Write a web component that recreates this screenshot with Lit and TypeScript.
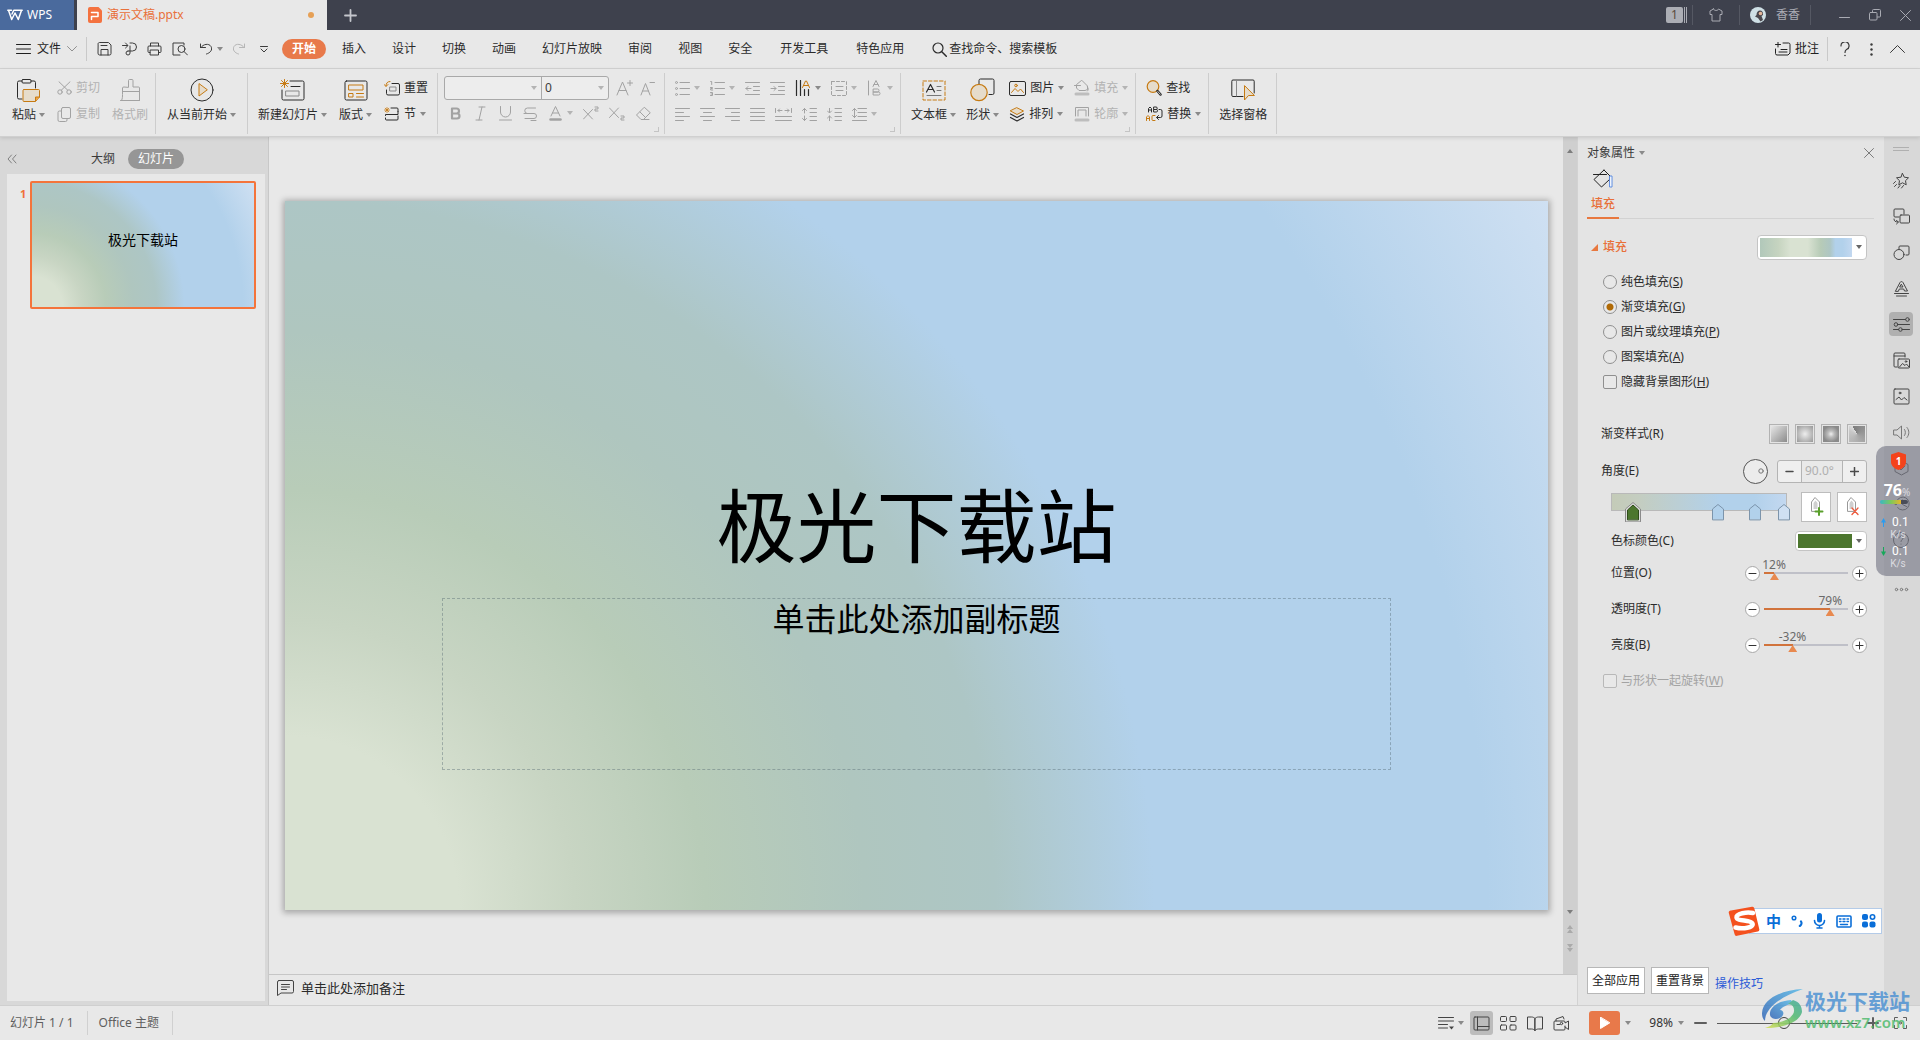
import { LitElement, html, css, svg, TemplateResult, SVGTemplateResult } from "lit";
import { customElement, property } from "lit/decorators.js";
import { classMap } from "lit/directives/class-map.js";

/* ---------- icon drawing helpers ---------- */

const pic = (w: number, h: number, body: SVGTemplateResult, cls = "ic") => html`
  <svg class=${cls} width=${w} height=${h} viewBox="0 0 ${w} ${h}" fill="none" stroke="currentColor"
    stroke-width="1" stroke-linecap="round" stroke-linejoin="round" aria-hidden="true">${body}</svg>`;

const caret = (cls = "caret") => html`
  <svg class=${cls} width="6" height="4" viewBox="0 0 6 4" fill="currentColor" aria-hidden="true"><path d="M0 0h6L3 4z"/></svg>`;

const O = "#c67a12";
const SAND = "#e6dccb";

const I = {
  wpsMark: pic(16, 12, svg`<path d="M0.800 1.200h3.700M11.500 1.200h3.700M1.500 1.200l3.200 9.300L8 4l3.300 6.500 3.200-9.300M5 5l1.800-3.800h4.700" stroke-width="1.500"/>`),
  docP: pic(14, 16, svg`<path d="M2 0h8.500L14 3.500V14a2 2 0 0 1-2 2H2a2 2 0 0 1-2-2V2a2 2 0 0 1 2-2z" fill="#f4723f" stroke="none"/><path d="M3.500 5.500h6.500v4H3.500v3" stroke="#fff" stroke-width="1.500"/>`),
  plus: pic(13, 13, svg`<path d="M6.500 1v11M1 6.500h11" stroke-width="1.800"/>`),
  shirt: pic(14, 14, svg`<path d="M4.500 1 1 3v3.500h2V13h8V6.500h2V3L9.500 1C9 3 5 3 4.500 1z"/>`),
  avatar: pic(16, 16, svg`<circle cx="8" cy="8" r="8" fill="#cfe0e6" stroke="none"/><path d="M6.500 8c0-3 1.500-4.500 3.500-4.500s3.500 1.500 3 4.500l-1.500 1 1.500 4-2.500 1.500L8 11 5 9.500z" fill="#4a484e" stroke="none"/><circle cx="10.500" cy="6.500" r="1.800" fill="#e5b79b" stroke="none"/>`),
  min: pic(11, 11, svg`<path d="M.5 7.500h10"/>`),
  restore: pic(12, 12, svg`<rect x="0.500" y="3.500" width="7.500" height="7.500" rx="1"/><path d="M3.500 3V1.500a1 1 0 0 1 1-1H10.500a1 1 0 0 1 1 1V7a1 1 0 0 1-1 1H8.500"/>`),
  close: pic(11, 11, svg`<path d="M.5.5l10 10M10.500.5l-10 10"/>`),
  burger: pic(15, 12, svg`<path d="M.5 1.500h14M.5 6h14M.5 10.500h14"/>`),
  chevDown: pic(10, 6, svg`<path d="M.5.5 5 5 9.500.5" stroke="#909090"/>`),
  save: pic(15, 14, svg`<path d="M1 2.500A1.500 1.500 0 0 1 2.500.5h9L14 3v8.500a1.500 1.500 0 0 1-1.500 1.500h-10A1.500 1.500 0 0 1 1 11.500zM4 13V7.500h7V13M4 3.500h6"/>`),
  exportP: pic(15, 14, svg`<path d="M.5 3.500h5M3.500 1l2.500 2.500L3.500 6M8 1h2.500a3.500 3.500 0 1 1 0 8H6M6 9a2 2 0 1 0 2 2V4"/>`),
  print: pic(15, 14, svg`<path d="M3.500 4V1h8v3M3 10.500H2a1 1 0 0 1-1-1V5a1 1 0 0 1 1-1h11a1 1 0 0 1 1 1v4.500a1 1 0 0 1-1 1h-1M3.500 8h8v5h-8z"/>`),
  preview: pic(16, 14, svg`<path d="M12 3V1H1v12h7"/><circle cx="9.500" cy="7" r="3.500"/><path d="M12 9.500l3.500 3.500"/>`),
  undo: pic(12, 12, svg`<path d="M.5 4.500h5M.5 4.500V1M1 4.500C3 1 9 0 11 3.500s-1 6.500-4.500 7.500"/>`),
  redo: pic(12, 12, svg`<path d="M11.500 4.500h-5M11.500 4.500V1M11 4.500C9 1 3 0 1 3.500S2 10 5.500 11"/>`),
  customize: pic(8, 7, svg`<path d="M.5.5h7M1 3l3 3 3-3"/>`),
  search: pic(15, 15, svg`<circle cx="6" cy="6" r="5" stroke-width="1.200"/><path d="M9.800 9.800l4.500 4.500" stroke-width="1.500"/>`),
  comment: pic(16, 14, svg`<path d="M3 0v5M.5 2.500h5M8 1h5.500A1.500 1.500 0 0 1 15 2.500V11l-2 2H2A1.500 1.500 0 0 1 .5 11.500V7M6 7.500h6M4 10h8"/>`),
  help: pic(10, 15, svg`<path d="M1 4a4 4 0 1 1 5.500 3.500C5.300 8.200 5 9 5 10.500" stroke-width="1.200"/><circle cx="5" cy="13.500" r=".8" fill="currentColor" stroke="none"/>`),
  dotsV: pic(3, 13, svg`<g fill="currentColor" stroke="none"><circle cx="1.500" cy="1.500" r="1.200"/><circle cx="1.500" cy="6.500" r="1.200"/><circle cx="1.500" cy="11.500" r="1.200"/></g>`),
  chevUp: pic(15, 8, svg`<path d="M.5 7.500l7-7 7 7"/>`),

  paste: pic(23, 23, svg`<path d="M5 2H2a1.500 1.500 0 0 0-1.500 1.500v15A1.500 1.500 0 0 0 2 20h3M14 2h3a1.500 1.500 0 0 1 1.500 1.500V9"/><rect x="5" y=".5" width="9" height="3.500" rx="1"/><path d="M7 10.500h14.500a1 1 0 0 1 1 1V18l-4 4.500H7a1 1 0 0 1-1-1v-10a1 1 0 0 1 1-1z" fill=${SAND} stroke=${O}/><path d="M18.500 22v-4h4" fill="#f2a33c" stroke=${O}/>`),
  cut: pic(15, 14, svg`<circle cx="3" cy="11" r="2.200"/><circle cx="12" cy="11" r="2.200"/><path d="M4.300 9.200 13 .8M10.700 9.200 2 .8"/>`),
  copy: pic(15, 15, svg`<path d="M10 12v1a1.500 1.500 0 0 1-1.500 1.500h-6A1.500 1.500 0 0 1 1 13V5.500A1.500 1.500 0 0 1 2.500 4H4"/><rect x="4.500" y=".5" width="9" height="11" rx="1.500"/>`),
  brush: pic(21, 22, svg`<path d="M8.500 8V1.500a1 1 0 0 1 1-1H12a1 1 0 0 1 1 1V8h5.500a1 1 0 0 1 1 1v12.500H1.500c1-2 1-4 1-6V9a1 1 0 0 1 1-1zM2.500 12.500h17M.5 21.500h19"/>`),
  playRound: pic(24, 24, svg`<circle cx="12" cy="12" r="11"/><path d="M9 6v12l8-6z" fill=${SAND} stroke=${O}/>`),
  newSlide: pic(25, 22, svg`<path d="M10 2h12.500A1.500 1.500 0 0 1 24 3.500v16a1.500 1.500 0 0 1-1.500 1.500h-19A1.500 1.500 0 0 1 2 19.500V11M11 7.500h9"/><rect x="6" y="12" width="13" height="5" stroke="#8a8a8a"/><path d="M4.500.5v8M.5 4.500h8M1.500 1.500l6 6M7.500 1.500l-6 6" stroke=${O}/>`),
  layout: pic(24, 21, svg`<rect x="1" y="1" width="22" height="19" rx="1.500"/><path d="M5 5h14v5H5zM5 13.500h4V17H5zM12.500 13.500h7M12.500 17h7" stroke=${O}/>`),
  reset: pic(16, 15, svg`<path d="M8 2.500h6A1.500 1.500 0 0 1 15.500 4v8.500a1.500 1.500 0 0 1-1.500 1.500H4a1.500 1.500 0 0 1-1.500-1.500V9"/><rect x="6" y="6" width="6" height="4" stroke="#8a8a8a"/><path d="M6 .5C3.500.5 2 2 2 5M.2 3.500 2 5.500 4 3.500" stroke=${O}/>`),
  section: pic(16, 14, svg`<path d="M7 1h6a1 1 0 0 1 1 1v2.500M1.500 8.500v-1h12.500v-3M1.500 11v1a1 1 0 0 0 1 1H13a1 1 0 0 0 1-1V9"/><path d="M3 .5v5M.5 3h5M1.200 1.200l3.600 3.600M4.800 1.200 1.200 4.800" stroke=${O} stroke-width=".8"/>`),

  fontUp: pic(17, 16, svg`<path d="M1 15 6.500 2 12 15M3 10.500h7M14 .5v5M11.500 3h5"/>`),
  fontDown: pic(15, 16, svg`<path d="M1 15 5.500 3.500 10 15M2.700 11h5.800M10 2.500h4.500"/>`),
  bold: pic(15, 15, svg`<path d="M4 2.500h4.500a2.400 2.400 0 0 1 0 5H4zM4 7.500h5a2.500 2.500 0 0 1 0 5H4z" stroke-width="2.200"/>`),
  italic: pic(15, 15, svg`<path d="M6 1h6M3 14h6M9 1 6 14"/>`),
  under: pic(15, 15, svg`<path d="M2.500.5V6a5 5 0 0 0 10 0V.5M1.500 14h12"/>`),
  strike: pic(15, 15, svg`<path d="M12.500 2H4.500a2.700 2.700 0 0 0 0 5.500h6.500a2.500 2.500 0 0 1 0 5H2M1 7.500h4M8 14.500h5"/>`),
  fontColor: pic(15, 15, svg`<path d="M3 10 7.500.5 12 10M4.500 7h6"/><path d="M2.500 13.500h10" stroke-width="2.500"/>`),
  sup: pic(16, 15, svg`<path d="M.5 3.500l9 9.500M9.500 3.500.5 13M12 1h3v2h-3v2h3"/>`),
  sub: pic(16, 15, svg`<path d="M.5 2l9 9.500M9.500 2l-9 9.500M12 10h3v2h-3v2h3"/>`),
  eraser: pic(16, 15, svg`<path d="M9 1.500 1.500 9 6 13.500h2.500L15 7zM5 6l5.500 5.500M8 13.500h6"/>`),

  bullets: pic(15, 15, svg`<path d="M5 1.500h9.500M5 7.500h9.500M5 13.500h9.500"/><circle cx="1.500" cy="1.500" r="1"/><circle cx="1.500" cy="7.500" r="1"/><circle cx="1.500" cy="13.500" r="1"/>`),
  numbers: pic(15, 15, svg`<path d="M5 1.500h9.500M5 7.500h9.500M5 13.500h9.500M.7.5h1v3M.5 6.500h2v1h-1.800v1.500h2M.5 11.500h2v3h-2M1 13h1"/>`),
  outdent: pic(15, 15, svg`<path d="M.5 1.500h14M8.500 5.500h6M8.500 9.500h6M.5 13.500h14M1 7.500h5M3 5.500l-2 2 2 2"/>`),
  indent: pic(15, 15, svg`<path d="M.5 1.500h14M8.500 5.500h6M8.500 9.500h6M.5 13.500h14M1 7.500h5M4 5.500l2 2-2 2"/>`),
  textDir: pic(16, 16, svg`<path d="M1.500.5v15M5.500.5v15M9.500 9.500v6M13.500 9.500v6" stroke-width="1.200"/><path d="M7.500 7.500l3-6.500h1l3 6.500M8.500 5.500h5" stroke=${O}/>`),
  alignBox: pic(16, 15, svg`<rect x=".5" y=".5" width="15" height="14" stroke-dasharray="3 2"/><path d="M5 5.500h7M5 9.500h7"/>`),
  abText: pic(16, 16, svg`<path d="M1.500 1v14M6 6.500 9 .5l3 6M7 4.500h4M6.500 9h4a1.500 1.500 0 0 1 0 3h-4zM6.500 12h5a1.500 1.500 0 0 1 0 3h-5z"/>`),
  alL: pic(15, 13, svg`<path d="M.5.5h14M.5 4.500h8M.5 8.500h14M.5 12.500h8"/>`),
  alC: pic(15, 13, svg`<path d="M.5.5h14M3.500 4.500h8M.5 8.500h14M3.500 12.500h8"/>`),
  alR: pic(15, 13, svg`<path d="M.5.5h14M6.500 4.500h8M.5 8.500h14M6.500 12.500h8"/>`),
  alJ: pic(15, 13, svg`<path d="M.5.5h14M.5 4.500h14M.5 8.500h14M.5 12.500h14"/>`),
  alD: pic(17, 13, svg`<path d="M.5.5v4M16.500.5v4M3 2.500h4M10 2.500h4M4.500 1 3 2.500 4.500 4M12.500 1 14 2.500 12.500 4M.5 8.500h16M.5 12.500h16"/>`),
  spUp: pic(15, 13, svg`<path d="M8 .5h6.500M8 4.500h6.500M8 8.500h6.500M8 12.500h6.500M2.500.5V5M.5 2.500l2-2 2 2M2.500 8v4.500M.5 10.500l2 2 2-2"/>`),
  spDown: pic(15, 13, svg`<path d="M8 .5h6.500M8 4.500h6.500M8 8.500h6.500M8 12.500h6.500M2.500 0v4.500M.5 3l2 2 2-2M2.500 8v5M.5 10l2-2 2 2"/>`),
  lineSp: pic(15, 13, svg`<path d="M6 .5h8.500M6 4.500h8.500M6 8.500h8.500M.5 12.500h14M2.500.5v9M.5 2.500l2-2 2 2M.5 7.500l2 2 2-2"/>`),

  textBox: pic(24, 21, svg`<rect x="1" y="1" width="22" height="19" stroke=${O} stroke-dasharray="3.500 2"/><path d="M4.500 12 8.500 4.500 12.500 12M6 9.500h5" stroke-width="1.200"/><path d="M5 15.500h14M15 6.500h4M15 10.500h4" stroke="#777"/>`),
  shapes: pic(25, 24, svg`<path d="M9 6V2.500A1.500 1.500 0 0 1 10.500 1h12A1.500 1.500 0 0 1 24 2.500V15a1.500 1.500 0 0 1-1.500 1.500H19"/><circle cx="9" cy="14.500" r="8.200" fill=${SAND} stroke=${O} stroke-width="1.200"/>`),
  image: pic(17, 15, svg`<rect x=".5" y=".5" width="16" height="14" rx="1.500"/><path d="M2.500 11.500l3.500-4 3 3 2.500-2.500 3 3.500" stroke=${O}/><circle cx="7" cy="4.500" r="1.300" stroke=${O}/>`),
  arrange: pic(16, 15, svg`<path d="M1.500 7 8 10.500 14.500 7M1.500 10.500 8 14l6.500-3.500" stroke-width="1.200"/><path d="M8 .8 14.500 4 8 7.500 1.500 4z" fill=${SAND} stroke=${O}/>`),
  fillTool: pic(16, 16, svg`<path d="M8 .5 13.500 6v3.500L11 10.500H5L2.500 8V5zM.5 5.500h6M13.500 7c1 1.500 1 3 0 4"/><path d="M2 14h12" stroke-width="3" stroke="#bdbdbd"/>`),
  outline: pic(16, 16, svg`<path d="M1.500 10V1.500h13V10M4 10V4h8v6"/><path d="M2 14h12" stroke-width="3" stroke="#bdbdbd"/>`),
  find: pic(16, 16, svg`<circle cx="7" cy="6.500" r="5.800" fill=${SAND} stroke=${O} stroke-width="1.200"/><path d="M11.500 11l3 3.500" stroke-width="2.500"/><path d="M11.800 11.500l2.400 2.700" stroke="#e8e8e8" stroke-width=".8"/>`),
  replace: pic(17, 16, svg`<path d="M2.500 6V2.500L4 1l1.500 1.500V6M2.500 4h3M8 1h2a1.200 1.200 0 0 1 0 2.500H8zM8 3.500h2.300a1.200 1.200 0 0 1 0 2.500H8zM13 3.500h1.500a1.500 1.500 0 0 1 1.500 1.500v5a1.500 1.500 0 0 1-1.500 1.500H11M12.500 9.500l-2 2 2 2"/><path d="M.5 14.500V11L2 9.500 3.500 11v3.500M.5 12.500h3M9 9.500H7a1 1 0 0 0-1 1v3a1 1 0 0 0 1 1h2" stroke=${O}/>`),
  selPane: pic(24, 22, svg`<path d="M12 17.500H2a1.200 1.200 0 0 1-1.200-1.200v-14A1.200 1.200 0 0 1 2 1h20a1.200 1.200 0 0 1 1.200 1.200V14"/><path d="M5.500 1v16" stroke="#888"/><path d="M13.500 7v14l4-4.500h5.500z" fill=${SAND} stroke=${O}/>`),

  collapse: pic(10, 10, svg`<path d="M4.500 1 1 5l3.500 4M9 1 5.500 5 9 9" stroke="#808080"/>`),
  noteBubble: pic(17, 16, svg`<path d="M2 .5h13A1.500 1.500 0 0 1 16.500 2v9.500A1.500 1.500 0 0 1 15 13H4L.5 15.500V2A1.500 1.500 0 0 1 2 .5zM4.500 4.500h8M4.500 7h8M4.500 9.500h5"/>`),
  bucket: pic(20, 20, svg`<path d="M11 1 1 10.500 8.500 18 17 10V7L11 1M.5 5.500h13" stroke="#222"/><rect x="17" y="7" width="2" height="11" stroke="#5b8be0" fill="#fff"/>`),

  sStar: pic(17, 17, svg`<path d="M9.500 1.500l1.800 3.700 4.200.6-3 2.900.7 4.100-3.700-2-3.700 2 .7-4.100-3-2.900 4.200-.6zM2.500 9.500l-2 2M3.500 12.500l-2 2M7 13.500l-2 2.500M10.500 13.500l-2 2.500"/>`),
  sSwap: pic(17, 17, svg`<path d="M6 9H2a1 1 0 0 1-1-1V2a1 1 0 0 1 1-1h8a1 1 0 0 1 1 1v4"/><rect x="7" y="7" width="9.500" height="8" rx="1"/><path d="M1 11c0 2 1 3 4 3M3.500 12.500l2 1.500-2 2"/>`),
  sShapes: pic(17, 17, svg`<path d="M6 5V3a1 1 0 0 1 1-1h8a1 1 0 0 1 1 1v7a1 1 0 0 1-1 1h-2"/><circle cx="6" cy="10.500" r="5"/>`),
  sText: pic(17, 17, svg`<path d="M2.500 11 7 2.500a1.700 1.700 0 0 1 3 0L14.500 11h-3l-.8-2H6.300l-.8 2zM7 7h3L8.500 4.500zM1.500 13.500h14M3.500 16h10"/>`),
  sProps: pic(17, 15, svg`<path d="M.5 2.500h12M5 7.500h11.500M.5 12.500h5M9.500 12.500h7"/><circle cx="14.500" cy="2.500" r="1.800"/><circle cx="3" cy="7.500" r="1.800"/><circle cx="7.500" cy="12.500" r="1.800"/>`),
  sLibrary: pic(17, 17, svg`<path d="M4 15H2a1 1 0 0 1-1-1V2a1 1 0 0 1 1-1h9a1 1 0 0 1 1 1v3M1 4h11"/><rect x="5" y="7" width="11.500" height="9" rx="1"/><path d="M6.500 15l3-3.500 2.500 2 1.500-1.500 2.500 3"/><circle cx="13" cy="9.500" r=".8"/>`),
  sImage: pic(17, 17, svg`<rect x="1" y="1" width="15" height="15" rx="1"/><path d="M3 11.500 6 9l2.500 3L11 9.500l3 2.500"/><circle cx="7" cy="5" r=".9"/>`),
  sSound: pic(17, 15, svg`<path d="M1 5h3l4.500-4v13L4 10H1zM11.500 4.500c1.200 1.800 1.200 4.200 0 6M14 2.500c2.500 3 2.500 7 0 10" stroke="#777"/>`),
  sHex: pic(15, 16, svg`<path d="M7.500 1 14 4.500v7L7.500 15 1 11.500v-7zM4.500 7.500l2.500 2.500 4-4"/>`),
  sClock: pic(17, 16, svg`<path d="M3.500 5.500a6.500 6.500 0 1 1 1 6M9.500 4v4.500l4 2M.5 7l2.500 2 2-2.500"/>`),
  sHelp: pic(16, 16, svg`<circle cx="8" cy="8" r="7.500"/><path d="M6 6a2 2 0 1 1 3 1.800c-.8.5-1 .9-1 1.700M8 12v.2"/>`),
  sMore: pic(15, 5, svg`<circle cx="2.500" cy="2.500" r="1.200" stroke="#777"/><circle cx="7.500" cy="2.500" r="1.200" stroke="#777"/><circle cx="12.500" cy="2.500" r="1.200" stroke="#777"/>`),

  stNotes: pic(16, 14, svg`<path d="M.5 1.500h15M.5 5h15M.5 8.500h9M.5 12h9"/><path d="M11 10.500h5l-2.500 3z" fill="currentColor" stroke="none"/>`),
  stNormal: pic(17, 15, svg`<rect x="1" y="1" width="15" height="13" rx="1"/><path d="M4.500 1v13M4.500 10.500H16"/>`),
  stGrid: pic(17, 15, svg`<rect x=".5" y=".5" width="6" height="5" rx="1"/><rect x="10" y=".5" width="6" height="5" rx="1"/><rect x=".5" y="9" width="6" height="5" rx="1"/><rect x="10" y="9" width="6" height="5" rx="1"/>`),
  stBook: pic(16, 15, svg`<path d="M8 2.500C7 1.500 6 1 4.500 1H.5v12h4C6 13 7 13.500 8 14.500M8 2.500C9 1.500 10 1 11.500 1h4v12h-4c-1.500 0-2.500.5-3.500 1.500zM8 2.500v12"/>`),
  stCam: pic(17, 15, svg`<path d="M12 10v3a1 1 0 0 1-1 1H2a1 1 0 0 1-1-1V6a1 1 0 0 1 1-1h9a1 1 0 0 1 1 1v1l3.500-2v8.500L12 11M3 5V3l7-2.500L11 3M4 8.500h3"/><circle cx="8.500" cy="7.500" r="1.200"/>`),
  fullScr: pic(13, 12, svg`<path d="M.5 3.500v-3h3M9.500.5h3v3M12.500 8.500v3h-3M3.500 11.500h-3v-3"/><circle cx="6.500" cy="6" r="1"/>`),
};

/* ---------- shared control styles ---------- */

const base = css`
  * { box-sizing: border-box; }
  svg { display: block; flex: none; }
  button, input {
    font: inherit; color: inherit; background: none; border: 0; margin: 0; padding: 0; outline: 0; border-radius: 0;
  }
  button {
    display: flex; align-items: center; justify-content: center; white-space: nowrap; line-height: 18px; flex: none;
  }
  a { text-decoration: none; }
  .caret { color: #8a8a8a; }
`;

/* ---------- ribbon button ---------- */

@customElement("ribbon-button")
class RibbonButton extends LitElement {
  @property({ attribute: false }) icon?: TemplateResult;
  @property() label = "";
  @property() hint = "";
  @property({ type: Boolean }) big = false;
  @property({ type: Boolean }) menu = false;
  @property({ type: Boolean, reflect: true }) off = false;

  static styles = [base, css`
    :host { display: block; flex: none; color: #2b2b2b; }
    :host([off]) { color: #a2a2a2; }
    :host([off]) .caret { color: #b4b4b4; }
    :host([off]) .text { color: #b2b2b2; }
    .row { gap: 4px; height: 26px; }
    .big { flex-direction: column; }
    .face { display: flex; align-items: center; justify-content: center; height: 30px; }
    .foot { display: flex; align-items: center; gap: 3px; height: 20px; }
  `];

  render() {
    const text = this.label ? html`<span class="text">${this.label}</span>` : "";
    if (this.big) {
      return html`<button class="big" ?disabled=${this.off}>
        <span class="face">${this.icon}</span>
        <span class="foot">${text}${this.menu ? caret() : ""}</span>
      </button>`;
    }
    return html`<button class="row" ?disabled=${this.off} aria-label=${this.label || this.hint}>
      ${this.icon}${text}${this.menu ? caret() : ""}
    </button>`;
  }
}

/* ---------- labelled slider with step buttons ---------- */

@customElement("value-slider")
class ValueSlider extends LitElement {
  @property() label = "";
  @property({ type: Number }) value = 0;
  @property({ type: Number }) min = 0;
  @property({ type: Number }) max = 100;

  static styles = [base, css`
    :host { display: block; }
    .line { display: flex; align-items: center; height: 36px; }
    label { flex: 1; }
    .step {
      width: 15px; height: 15px; border-radius: 50%; background: #fff; border: 1px solid #a8a8a8; color: #333;
    }
    .rail { position: relative; width: 84px; margin: 0 4px; height: 36px; }
    output {
      position: absolute; top: 1px; left: var(--at); transform: translateX(-50%);
      line-height: 18px; color: #6a6a6a;
    }
    input {
      appearance: none; display: block; position: absolute; left: -4px; top: 10px; width: 92px; height: 16px;
      background: linear-gradient(90deg, #d1733c var(--at), #bfc0c8 var(--at)) 4px 7px / 84px 2px no-repeat;
    }
    input::-webkit-slider-thumb {
      appearance: none; width: 9px; height: 7px; background: #e8894f; margin-top: 7px;
      clip-path: polygon(50% 0, 100% 100%, 0 100%);
    }
  `];

  render() {
    const at = ((this.value - this.min) / (this.max - this.min)) * 100;
    return html`<div class="line" style="--at:${at}%">
      <label for="r">${this.label}</label>
      <button class="step" aria-label="减少">${pic(9, 9, svg`<path d="M1 4.500h7"/>`)}</button>
      <div class="rail">
        <output for="r">${this.value}%</output>
        <input id="r" type="range" min=${this.min} max=${this.max} .value=${String(this.value)} />
      </div>
      <button class="step" aria-label="增加">${pic(9, 9, svg`<path d="M1 4.500h7M4.500 1v7"/>`)}</button>
    </div>`;
  }
}

/* ---------- property panel ---------- */

@customElement("property-panel")
class PropertyPanel extends LitElement {
  static styles = [base, css`
    :host {
      display: flex; flex-direction: column; background: #e4e4e4; padding: 0 10px 0 9px;
      border-left: 1px solid #d2d2d2; white-space: nowrap;
    }
    .head { display: flex; align-items: center; gap: 4px; height: 32px; color: #3b3b3b; }
    .head .x { margin-left: auto; color: #7b7b7b; }
    .tabs { display: flex; border-bottom: 1px solid #d2d2d2; }
    .tab {
      flex-direction: column; width: 32px; gap: 6px; padding-bottom: 4px; margin-bottom: -1px;
      color: #e8703a; border-bottom: 2px solid #e8783f; font-weight: 500;
    }
    .body { padding: 11px 7px 0 4px; }
    .between { display: flex; align-items: center; justify-content: space-between; }
    .section { height: 34px; }
    .section .name { gap: 5px; color: #e8703a; font-weight: 500; }
    .combo {
      padding: 2px 4px 2px 2px; gap: 4px; background: #fff; border: 1px solid #c4c4c4; border-radius: 4px; color: #666;
    }
    .preview {
      width: 92px; height: 19px;
      background: linear-gradient(90deg, #b1c8ba, #c6d4c0 20%, #d9e2d2 33%, #d9e2d2 52%, #b7cbb7 66%, #aec6c3 76%, #b2d1eb 82%, #b2d1eb 90%, #c3d8f0);
    }
    .solid { width: 54px; height: 14px; background: #4c762e; }
    .opts { margin: 5px 0 0 12px; }
    .opt { display: flex; align-items: center; gap: 4px; height: 25px; line-height: 18px; color: #2b2b2b; }
    .opt input {
      appearance: none; flex: none; width: 14px; height: 14px; border: 1px solid #8f8f8f; background: #e8e8e8; border-radius: 2px;
    }
    .opt input[type="radio"] { border-radius: 50%; }
    .opt input[type="radio"]:checked { background: radial-gradient(circle, #b06a06 0 3px, #e8e8e8 4px); }
    .opt.off { color: #a3a3a3; }
    .opt.off input { border-color: #b8b8b8; }
    .style { height: 32px; margin: 24px 0 0 10px; color: #2b2b2b; }
    .swatches { display: flex; gap: 6px; }
    .sw { width: 20px; height: 20px; border: 1px solid #b2b2b2; padding: 1px; }
    .sw i { display: block; width: 16px; height: 16px; }
    .g1 { background: linear-gradient(135deg, #e6e6e6, #8b8b8b); }
    .g2 { background: radial-gradient(circle, #ededed, #979797); }
    .g3 { background: radial-gradient(closest-side, #eee, #bbb 40%, #8a8a8a); }
    .g4 { background: conic-gradient(from 330deg, #7d7d7d, #929292 25%, #a8a8a8 50%, #c8c8c8 90%, #dcdcdc); }
    .angle { height: 42px; margin-left: 10px; }
    .dialrow { display: flex; align-items: center; gap: 9px; }
    .dial { width: 25px; height: 25px; border: 1px solid #555; border-radius: 50%; justify-content: flex-end; padding-right: 3px; background: #ececec; }
    .spin { display: flex; height: 23px; width: 90px; border: 1px solid #b4b4b4; border-radius: 3px; background: #efefef; color: #4a4a4a; }
    .spin button { width: 23px; }
    .spin input { width: 43px; flex: 1; min-width: 0; padding-left: 3px; border: solid #b4b4b4; border-width: 0 1px; color: #b0b0b0; background: #e9e9e9; }
    .stops { display: flex; align-items: flex-start; justify-content: space-between; height: 34px; margin-left: 20px; }
    .ramp {
      position: relative; width: 176px; height: 18px; margin-top: 1px; border: 1px solid #b9b9b9;
      background: linear-gradient(90deg, #c4cbb8, #c4cdc0 15%, #b2d1eb 62%, #b2d1eb 82%, #c3d8f0);
    }
    .pin { position: absolute; top: 8px; transform: translateX(-50%); }
    .stopbtns { display: flex; gap: 6px; }
    .stopbtns button { width: 30px; height: 30px; background: #fff; border: 1px solid #bdbdbd; }
    .rows { margin-left: 20px; color: #2b2b2b; }
    .color { height: 29px; }
    .last { margin: 5px 0 0 12px; }
    .foot { display: flex; align-items: center; gap: 6px; margin-top: auto; padding-bottom: 11px; }
    .foot button { height: 27px; width: 58px; background: #fff; border: 1px solid #b7b7b7; color: #222; }
    .foot a { color: #2a5bd7; padding-top: 6px; }
  `];

  private option(type: string, id: string, text: string, key: string, checked = false, off = false) {
    return html`<div class=${classMap({ opt: true, off })}>
      <input type=${type} id=${id} name=${type === "radio" ? "fill" : id} ?checked=${checked} ?disabled=${off} />
      <label for=${id}>${text}(<u>${key}</u>)</label>
    </div>`;
  }

  private pin(at: number, color: string, selected = false) {
    return html`<button class="pin" style="left:${at}%" aria-label="色标">
      ${selected
        ? pic(16, 20, svg`<path d="M.5 19.500V7L8 .5 15.500 7v12.500z" fill="#ddd" stroke="#8a8a8a"/><path d="M2.500 17.500V8L8 3l5.500 5v9.500z" fill=${color} stroke="#2f4d1a"/>`)
        : pic(12, 20, svg`<path d="M.5 17.500V7L6 2.500 11.500 7v10.500z" fill=${color} stroke="#7c94ab"/>`)}
    </button>`;
  }

  render() {
    return html`
      <div class="head"><span>对象属性</span>${caret()}<button class="x" aria-label="关闭">${pic(10, 10, svg`<path d="M.5.5l9 9M9.500.5l-9 9"/>`)}</button></div>
      <div class="tabs"><button class="tab">${I.bucket}<span>填充</span></button></div>
      <div class="body">
        <div class="between section">
          <button class="name">${pic(7, 7, svg`<path d="M7 0v7H0z" fill="#e8783f" stroke="none"/>`)}<span>填充</span></button>
          <button class="combo" aria-label="填充预设"><span class="preview"></span>${caret("")}</button>
        </div>
        <div class="opts">
          ${this.option("radio", "solid", "纯色填充", "S")}
          ${this.option("radio", "grad", "渐变填充", "G", true)}
          ${this.option("radio", "tex", "图片或纹理填充", "P")}
          ${this.option("radio", "pat", "图案填充", "A")}
          ${this.option("checkbox", "hide", "隐藏背景图形", "H")}
        </div>
        <div class="between style"><span>渐变样式(R)</span>
          <div class="swatches">
            ${["线性", "射线", "矩形", "路径"].map((n, k) => html`<button class="sw" aria-label=${n}><i class="g${k + 1}"></i></button>`)}
          </div>
        </div>
        <div class="between angle"><label for="ang">角度(E)</label>
          <div class="dialrow">
            <button class="dial" aria-label="角度盘">${pic(6, 6, svg`<circle cx="3" cy="3" r="2.200" stroke="#777"/>`)}</button>
            <div class="spin">
              <button aria-label="减">${pic(9, 9, svg`<path d="M1 4.500h7" stroke-width="1.500"/>`)}</button>
              <input id="ang" value="90.0°" disabled />
              <button aria-label="加">${pic(9, 9, svg`<path d="M.5 4.500h8M4.500.5v8" stroke-width="1.500"/>`)}</button>
            </div>
          </div>
        </div>
        <div class="stops">
          <div class="ramp">
            ${this.pin(61, "#b2d1eb")}${this.pin(82, "#b2d1eb")}${this.pin(99, "#cfe0f3")}${this.pin(12, "#4c762e", true)}
          </div>
          <div class="stopbtns">
            <button aria-label="添加色标">${pic(18, 22, svg`<path d="M4.500 15V6L8 1.500 12.500 6v9z" fill="#fff" stroke="#999"/><path d="M6.500 13V7L8.500 4.500 10.500 7v6z" fill="#cfcfcf" stroke="none"/><path d="M12 12v7M8.500 15.500h7" stroke="#5aa02c" stroke-width="2"/>`)}</button>
            <button aria-label="删除色标">${pic(18, 22, svg`<path d="M4.500 15V6L8 1.500 12.500 6v9z" fill="#fff" stroke="#999"/><path d="M6.500 13V7L8.500 4.500 10.500 7v6z" fill="#cfcfcf" stroke="none"/><path d="M9 12l6 6.500M15 12l-6 6.500" stroke="#ee5a3c" stroke-width="1.300"/>`)}</button>
          </div>
        </div>
        <div class="rows">
          <div class="between color"><span>色标颜色(C)</span>
            <button class="combo" aria-label="色标颜色"><span class="solid"></span>${caret("")}</button></div>
          <value-slider label="位置(O)" .value=${12}></value-slider>
          <value-slider label="透明度(T)" .value=${79}></value-slider>
          <value-slider label="亮度(B)" .value=${-32} .min=${-100} .max=${100}></value-slider>
        </div>
        <div class="last">${this.option("checkbox", "rot", "与形状一起旋转", "W", false, true)}</div>
      </div>
      <div class="foot"><button>全部应用</button><button>重置背景</button><a href="#tips">操作技巧</a></div>
    `;
  }
}

/* ---------- application window ---------- */

@customElement("app-root")
class AppRoot extends LitElement {
  static styles = [base, css`
    :host {
      display: flex; flex-direction: column; min-height: 100vh; position: relative; overflow: hidden;
      background: #e8e8e8; color: #2b2b2b; font-size: 12px; line-height: 18px;
      font-family: "Noto Sans", "Noto Sans CJK SC", sans-serif;
      --page: radial-gradient(circle farthest-corner at 0 100%, #d9e2d2 12%, #c8d5c3 20%, #b8ccb8 29%, #afc6bf 40%, #adc6c5 49%, #b2d1eb 60%, #b2d1eb 83%, #cfe0f2 100%);
    }
    .title { display: flex; height: 30px; background: #3e414d; color: #a9abb3; }
    .wps { width: 74px; gap: 4px; justify-content: flex-start; padding-left: 7px; background: #4a6a9d; color: #fff; margin-right: 3px; }
    .doc { display: flex; align-items: center; gap: 5px; width: 250px; padding: 0 13px 0 11px; background: #e8e8e8; color: #e8703a; }
    .dot { width: 6px; height: 6px; border-radius: 50%; background: #e6a056; margin-left: auto; }
    .add { margin-left: 17px; color: #c4c6cc; }
    .sys { display: flex; align-items: center; margin-left: auto; padding-right: 9px; gap: 10px; }
    .badge { display: flex; height: 16px; gap: 1px; margin-right: -5px; }
    .badge b { width: 17px; background: #acaeb5; color: #5a4a3c; border-radius: 2px; text-align: center; line-height: 16px; font-weight: 400; }
    .badge i { width: 1px; background: #a9abb3; }
    .bar { width: 1px; height: 20px; background: #555863; }
    .shirt { margin: 0 6px; }
    .win { gap: 19px; display: flex; margin-left: 18px; }

    .menu { display: flex; align-items: center; height: 39px; border-bottom: 1px solid #d4d4d4; padding: 0 15px 0 16px; }
    .file { gap: 6px; color: #1f1f1f; margin-right: 9px; }
    .rule { width: 1px; height: 24px; background: #c9c9c9; flex: none; }
    .quick { display: flex; align-items: center; gap: 10px; padding-left: 10px; color: #3d3d3d; }
    .quick .history { gap: 5px; margin-left: 2px; }
    .quick .faint { color: #b5b5b5; }
    .quick .cust { margin: 0 14px 0 5px; }
    .tabs { display: flex; align-items: center; gap: 26px; }
    .tabs.more { gap: 28px; margin-left: 28px; }
    .tabs .on { background: #e8794a; color: #fff; font-weight: 700; border-radius: 10px; padding: 0 10px; height: 20px; margin-right: -10px; }
    .seek { gap: 2px; }
    .right { display: flex; align-items: center; margin-left: auto; color: #3a3a3a; }
    .right .note { gap: 4px; margin-right: 8px; color: #222; }
    .right .q { margin: 0 20px 0 12px; }
    .right .up { margin-left: 17px; }

    .ribbon {
      display: flex; height: 68px; border-bottom: 1px solid #d0d0d0; position: relative; z-index: 1;
      background: #e8e8e8; box-shadow: 0 1px 4px rgba(0, 0, 0, .12);
    }
    .group { display: flex; position: relative; padding: 6px 10px 0; gap: 12px; flex: none; }
    .group::after { content: ""; position: absolute; right: 0; top: 4px; bottom: 2px; width: 1px; background: #cdcdcd; }
    .group.clip { padding: 6px 8px 0 12px; }
    .group.play { padding: 6px 12px 0 11px; }
    .group.tight { gap: 10px; padding-right: 8px; }
    .stack { display: flex; flex-direction: column; align-items: flex-start; }
    .tools { display: flex; gap: 10px; height: 26px; align-items: center; }
    .tools.face { gap: 7px; }
    .group.font { padding-left: 6px; }
    .chars { padding-left: 4px; height: 24px; }
    .box { display: flex; width: 165px; height: 24px; border: 1px solid #a9a9a9; border-radius: 3px; background: #ededed; }
    .field { display: flex; align-items: center; padding-right: 4px; width: 96px; }
    .field.size { width: 67px; border-left: 1px solid #a9a9a9; }
    .field input { flex: 1; min-width: 0; padding-left: 3px; color: #3c3c3c; }
    .field .caret { color: #b4b4b4; }
    .corner { position: absolute; right: 6px; bottom: 4px; width: 5px; height: 5px; border: solid #c4c4c4; border-width: 0 1px 1px 0; }

    .work { display: flex; flex: 1; }
    .left { display: flex; flex-direction: column; width: 269px; background: #d8d8d8; border-right: 1px solid #c8c8c8; padding: 0 3px 4px 7px; }
    .views { display: flex; align-items: center; height: 37px; padding-top: 6px; color: #3b3b3b; }
    .views .outline { margin: 0 13px 0 74px; }
    .views .pill { background: #969696; color: #fff; border-radius: 10px; height: 20px; padding: 0 10px; }
    .list { flex: 1; background: #e8e8e8; padding: 7px 9px 0 13px; display: flex; align-items: flex-start; gap: 4px; }
    .num { color: #f0703a; font-weight: 700; line-height: 26px; width: 6px; font-size: 11px; }
    .thumb {
      flex: 1; height: 128px; border: 2px solid #f4743b; border-radius: 2px; background: var(--page); color: #000;
      font-size: 14px; line-height: 20px; padding-bottom: 10px;
    }

    .center { display: flex; flex-direction: column; flex: 1; min-width: 0; }
    .stage { display: flex; flex: 1; }
    .canvas { flex: 1; display: flex; align-items: center; padding: 0 15px 0 16px; }
    .slide {
      position: relative; flex: 1; aspect-ratio: 1263 / 709; background: var(--page); color: #000;
      box-shadow: 0 1px 6px 2px rgba(0, 0, 0, .28);
    }
    .ph { position: absolute; left: 12.400%; width: 75.200%; display: flex; justify-content: center; margin: 0; font-weight: 400; }
    .ph.head { top: 0; height: 52.400%; align-items: flex-end; font-size: 80px; line-height: 96px; }
    .ph.subtitle { top: 56%; height: 24.200%; border: 1px dashed rgba(80, 100, 110, .4); font-size: 32px; line-height: 40px; }
    .scroll {
      width: 14px; background: #cfcfcf; display: flex; flex-direction: column; align-items: center; padding: 12px 0 11px; color: #7d7d7d;
    }
    .scroll .down { margin-top: auto; margin-bottom: 11px; }
    .scroll .pg { margin-bottom: 11px; color: #aaa; }
    .notes { display: flex; align-items: center; gap: 7px; height: 31px; border-top: 1px solid #c6c6c6; padding: 0 0 4px 8px; color: #444; }
    .notes input { flex: 1; font-size: 13px; line-height: 20px; }
    .notes input::placeholder { color: #2b2b2b; opacity: 1; }

    property-panel { width: 307px; }
    .side { width: 36px; background: #d8d8d8; display: flex; flex-direction: column; align-items: center; padding: 10px 2px 0 0; color: #444; }
    .side button { width: 24px; height: 24px; margin-bottom: 12px; border-radius: 4px; }
    .side .cur { background: #b0b0b0; }
    .side .more { margin-top: 13px; }
    .grip { width: 16px; height: 4px; border: solid #b0b0b0; border-width: 1px 0; margin-bottom: 17px; }

    .status { display: flex; align-items: center; height: 35px; border-top: 1px solid #cfcfcf; color: #5e5e5e; padding: 0 13px 0 10px; }
    .status .rule { background: #d0d0d0; margin: 0 11px 0 13px; }
    .modes { display: flex; align-items: center; margin-left: auto; color: #444; gap: 10px; }
    .modes .lay { gap: 4px; margin-right: -4px; }
    .modes .cur { width: 23px; height: 24px; background: #bcbcbc; border-radius: 3px; margin-right: -3px; }
    .show { width: 31px; height: 24px; border-radius: 3px; background: #e8794a; margin: 0 5px 0 19px; }
    .pct { gap: 5px; margin: 0 10px 0 18px; color: #333; }
    .zoom { appearance: none; width: 140px; height: 16px; margin: 0 10px; background: linear-gradient(#5a5a5a, #5a5a5a) 0 8px / 100% 1px no-repeat; }
    .zoom::-webkit-slider-thumb { appearance: none; width: 12px; height: 12px; border: 1px solid #444; border-radius: 50%; background: rgba(232, 232, 232, .6); }
    .full { margin-left: 15px; }

    .ime { position: absolute; right: 38px; bottom: 104px; display: flex; align-items: center; }
    .ime .tray { display: flex; align-items: center; gap: 10px; height: 26px; padding: 0 5px 0 16px; margin-left: -11px; background: #fff; border: 1px solid #b4cbe8; color: #0a6ed8; }
    .ime .logo { position: relative; z-index: 1; }
    .ime b { font-size: 15px; line-height: 20px; }

    .meter {
      position: absolute; right: 0; top: 446px; width: 44px; height: 130px; border-radius: 10px 0 0 10px; overflow: hidden;
      background: rgba(122, 123, 136, .65); color: #fff; display: flex; flex-direction: column; align-items: center;
    }
    .meter .shield { margin: 6px 0 10px; }
    .meter .load { display: flex; align-items: baseline; font-weight: 700; font-size: 16px; line-height: 20px; padding-right: 2px; }
    .meter small { font-size: 10px; font-weight: 400; color: #dcdce0; line-height: 12px; }
    .meter .gauge { width: 28px; height: 4px; border-radius: 2px; margin: 0 8px 11px 0; background: linear-gradient(90deg, #3bb7c4, #7fc95a 40%, #e8b52c 75%, #4a4d58 76%); }
    .meter .net { display: flex; width: 100%; align-items: center; gap: 6px; padding-left: 5px; font-family: Roboto, sans-serif; line-height: 14px; }
    .meter .unit { font-family: Roboto, sans-serif; margin-bottom: 3px; }

    .mark { position: absolute; right: 10px; bottom: 10px; display: flex; align-items: center; gap: 2px; opacity: .82; pointer-events: none; }
    .mark b { display: block; color: #4a90d2; font-size: 21px; line-height: 26px; font-weight: 700; }
    .mark span { display: block; color: #4cba6b; font-size: 15px; line-height: 16px; font-weight: 600; }
  `];

  private rb(icon: TemplateResult, label: string, o: { big?: boolean; menu?: boolean; off?: boolean; hint?: string } = {}) {
    return html`<ribbon-button .icon=${icon} label=${label} hint=${o.hint ?? ""}
      ?big=${!!o.big} ?menu=${!!o.menu} ?off=${!!o.off}></ribbon-button>`;
  }

  private titleBar() {
    return html`<header class="title">
      <button class="wps">${I.wpsMark}<span>WPS</span></button>
      <div class="doc">${I.docP}<span>演示文稿.pptx</span><span class="dot"></span></div>
      <button class="add" aria-label="新建">${I.plus}</button>
      <div class="sys">
        <span class="badge"><b>1</b><i></i><i></i></span>
        <span class="bar"></span>
        <button class="shirt" aria-label="皮肤">${I.shirt}</button>
        <span class="bar"></span>
        ${I.avatar}<span>香香</span>
        <span class="bar"></span>
        <div class="win">
          <button aria-label="最小化">${I.min}</button>
          <button aria-label="还原">${I.restore}</button>
          <button aria-label="关闭">${I.close}</button>
        </div>
      </div>
    </header>`;
  }

  private menuBar() {
    const q = (icon: TemplateResult, name: string, cls = "") => html`<button class=${cls} aria-label=${name}>${icon}</button>`;
    return html`<nav class="menu">
      <button class="file">${I.burger}<span>文件</span>${I.chevDown}</button>
      <span class="rule"></span>
      <div class="quick">
        ${q(I.save, "保存")}${q(I.exportP, "输出")}${q(I.print, "打印")}${q(I.preview, "预览")}
        <button class="history" aria-label="撤销">${I.undo}${caret()}</button>
        ${q(I.redo, "恢复", "faint")}${q(I.customize, "自定义", "cust")}
      </div>
      <div class="tabs">
        <button class="on">开始</button>
        ${["插入", "设计", "切换", "动画", "幻灯片放映", "审阅", "视图", "安全"].map((t) => html`<button>${t}</button>`)}
      </div>
      <div class="tabs more">
        <button>开发工具</button><button>特色应用</button>
        <button class="seek">${I.search}<span>查找命令、搜索模板</span></button>
      </div>
      <div class="right">
        <button class="note">${I.comment}<span>批注</span></button>
        <span class="rule"></span>
        ${q(I.help, "帮助", "q")}${q(I.dotsV, "更多")}${q(I.chevUp, "收起", "up")}
      </div>
    </nav>`;
  }

  private ribbon() {
    const off = { off: true };
    const t = (icon: TemplateResult, hint: string, menu = false) => this.rb(icon, "", { off: true, menu, hint });
    return html`<section class="ribbon">
      <div class="group clip">
        ${this.rb(I.paste, "粘贴", { big: true, menu: true })}
        <div class="stack">${this.rb(I.cut, "剪切", off)}${this.rb(I.copy, "复制", off)}</div>
        ${this.rb(I.brush, "格式刷", { big: true, off: true })}
      </div>
      <div class="group play">${this.rb(I.playRound, "从当前开始", { big: true, menu: true })}</div>
      <div class="group">
        ${this.rb(I.newSlide, "新建幻灯片", { big: true, menu: true })}
        ${this.rb(I.layout, "版式", { big: true, menu: true })}
        <div class="stack">${this.rb(I.reset, "重置")}${this.rb(I.section, "节", { menu: true })}</div>
      </div>
      <div class="group font">
        <div class="stack">
          <div class="tools face">
            <div class="box">
              <div class="field"><input aria-label="字体" />${caret()}</div>
              <div class="field size"><input aria-label="字号" value="0" />${caret()}</div>
            </div>
            ${t(I.fontUp, "增大字号")}${t(I.fontDown, "减小字号")}
          </div>
          <div class="tools chars">
            ${t(I.bold, "加粗")}${t(I.italic, "倾斜")}${t(I.under, "下划线")}${t(I.strike, "删除线")}
            ${t(I.fontColor, "字体颜色", true)}${t(I.sup, "上标")}${t(I.sub, "下标")}${t(I.eraser, "清除格式")}
          </div>
        </div>
        <span class="corner"></span>
      </div>
      <div class="group tight">
        <div class="stack">
          <div class="tools">
            ${t(I.bullets, "项目符号", true)}${t(I.numbers, "编号", true)}${t(I.outdent, "减少缩进")}${t(I.indent, "增加缩进")}
            ${this.rb(I.textDir, "", { menu: true, hint: "文字方向" })}${t(I.alignBox, "对齐文本", true)}${t(I.abText, "转换", true)}
          </div>
          <div class="tools">
            ${t(I.alL, "左对齐")}${t(I.alC, "居中")}${t(I.alR, "右对齐")}${t(I.alJ, "两端对齐")}${t(I.alD, "分散对齐")}
            ${t(I.spUp, "增大段距")}${t(I.spDown, "减小段距")}${t(I.lineSp, "行距", true)}
          </div>
        </div>
        <span class="corner"></span>
      </div>
      <div class="group tight">
        ${this.rb(I.textBox, "文本框", { big: true, menu: true })}
        ${this.rb(I.shapes, "形状", { big: true, menu: true })}
        <div class="stack">${this.rb(I.image, "图片", { menu: true })}${this.rb(I.arrange, "排列", { menu: true })}</div>
        <div class="stack">${this.rb(I.fillTool, "填充", { menu: true, off: true })}${this.rb(I.outline, "轮廓", { menu: true, off: true })}</div>
        <span class="corner"></span>
      </div>
      <div class="group tight">
        <div class="stack">${this.rb(I.find, "查找")}${this.rb(I.replace, "替换", { menu: true })}</div>
      </div>
      <div class="group">${this.rb(I.selPane, "选择窗格", { big: true })}</div>
    </section>`;
  }

  private workArea() {
    const side: [TemplateResult, string][] = [
      [I.sStar, "动画"], [I.sSwap, "切换"], [I.sShapes, "形状"], [I.sText, "艺术字"], [I.sProps, "属性"], [I.sLibrary, "素材"],
      [I.sImage, "图片"], [I.sSound, "声音"], [I.sHex, "安全"], [I.sClock, "历史"], [I.sHelp, "帮助"],
    ];
    return html`<main class="work">
      <aside class="left">
        <div class="views">
          <button aria-label="折叠">${I.collapse}</button>
          <button class="outline">大纲</button><button class="pill">幻灯片</button>
        </div>
        <div class="list"><span class="num">1</span><button class="thumb">极光下载站</button></div>
      </aside>
      <section class="center">
        <div class="stage">
          <div class="canvas">
            <article class="slide">
              <h1 class="ph head">极光下载站</h1>
              <p class="ph subtitle">单击此处添加副标题</p>
            </article>
          </div>
          <div class="scroll">
            ${pic(6, 4, svg`<path d="M0 4h6L3 0z" fill="currentColor" stroke="none"/>`)}
            ${caret("down")}
            ${pic(6, 8, svg`<path d="M0 4h6L3 0zM0 8h6L3 4z" fill="currentColor" stroke="none"/>`, "pg")}
            ${pic(6, 8, svg`<path d="M0 0h6L3 4zM0 4h6L3 8z" fill="currentColor" stroke="none"/>`, "pg")}
          </div>
        </div>
        <div class="notes">${I.noteBubble}<input aria-label="备注" placeholder="单击此处添加备注" /></div>
      </section>
      <property-panel></property-panel>
      <aside class="side">
        <span class="grip"></span>
        ${side.map(([icon, name], k) => html`<button class=${classMap({ cur: k === 4 })} aria-label=${name}>${icon}</button>`)}
        <button class="more" aria-label="更多">${I.sMore}</button>
      </aside>
    </main>`;
  }

  private statusBar() {
    return html`<footer class="status">
      <span>幻灯片 1 / 1</span><span class="rule"></span><span>Office 主题</span><span class="rule"></span>
      <div class="modes">
        <button class="lay" aria-label="备注">${I.stNotes}${caret()}</button>
        <button class="cur" aria-label="普通视图">${I.stNormal}</button>
        <button aria-label="浏览视图">${I.stGrid}</button>
        <button aria-label="阅读视图">${I.stBook}</button>
        <button aria-label="录制">${I.stCam}</button>
      </div>
      <button class="show" aria-label="放映">${pic(10, 12, svg`<path d="M.5.5v11L9.500 6z" fill="#fff" stroke="#fff"/>`)}</button>
      ${caret()}
      <button class="pct"><span>98%</span>${caret()}</button>
      <button aria-label="缩小">${pic(13, 12, svg`<path d="M1 6h11" stroke-width="2"/>`)}</button>
      <input class="zoom" type="range" aria-label="缩放" .value=${"48"} />
      <button aria-label="放大">${pic(12, 12, svg`<path d="M1 6h10M6 1v10" stroke-width="2"/>`)}</button>
      <button class="full" aria-label="全屏">${I.fullScr}</button>
    </footer>`;
  }

  private overlays() {
    const arrow = (up: boolean, c: string) => pic(5, 9, up
      ? svg`<path d="M2.500 9V4" stroke=${c}/><path d="M0 4.500h5L2.500 0z" fill=${c} stroke="none"/>`
      : svg`<path d="M2.500 0v5" stroke=${c}/><path d="M0 4.500h5L2.500 9z" fill=${c} stroke="none"/>`);
    return html`
      <div class="ime">
        ${pic(32, 30, svg`<path d="M3 4.500 24 .8a2 2 0 0 1 2.300 1.500l5 21a2 2 0 0 1-1.500 2.300L9 29.800a2 2 0 0 1-2.400-1.500L.8 7A2 2 0 0 1 3 4.500z" fill="#f4511e" stroke="none"/><path d="M25 7C19 5.500 8 7.500 8.500 11.500S23 13.500 24.500 17.500 15 23.500 7.500 21.500" stroke="#fff" stroke-width="4.500"/>`, "logo")}
        <div class="tray">
          <b>中</b>
          ${pic(12, 12, svg`<circle cx="3" cy="3" r="1.800" stroke-width="1.500"/><path d="M10 6.500c1 1.500.3 3.500-1.200 4.500" stroke-width="2.200"/>`)}
          ${pic(13, 16, svg`<rect x="4" y="0" width="5" height="9.500" rx="2.500" fill="currentColor" stroke="none"/><path d="M1.500 7.500a5 5 0 0 0 10 0M6.500 12.500v2M4 15h5" stroke-width="1.600"/>`)}
          ${pic(16, 13, svg`<rect x="1" y="1" width="14" height="11" rx="1" stroke-width="1.600"/><path d="M3.500 4h1.500M7 4h2M11 4h1.500M3.500 6.500h1.500M7 6.500h2M11 6.500h1.500M4.500 9.500h7" stroke-width="1.400"/>`)}
          ${pic(14, 14, svg`<g fill="currentColor" stroke="none"><rect x="0" y="0" width="6" height="6" rx="2"/><rect x="0" y="7.500" width="6" height="6" rx="2"/><rect x="7.500" y="7.500" width="6" height="6" rx="2"/></g><circle cx="10.500" cy="3" r="2.200" stroke-width="1.600"/>`)}
        </div>
      </div>
      <div class="meter">
        <svg class="shield" width="15" height="18" viewBox="0 0 15 18" aria-hidden="true">
          <path d="M7.500 0 15 2.500V10c0 4-4 7-7.500 8C4 17 0 14 0 10V2.500z" fill="#f4431c"/>
          <text x="7.500" y="12.500" font-size="10" font-weight="700" fill="#fff" text-anchor="middle">1</text>
        </svg>
        <span class="load">76<small>%</small></span>
        <span class="gauge"></span>
        <span class="net">${arrow(true, "#2b9cf0")}<span>0.1</span></span>
        <small class="unit">K/s</small>
        <span class="net">${arrow(false, "#17a85a")}<span>0.1</span></span>
        <small class="unit">K/s</small>
      </div>
      <div class="mark">
        <svg width="42" height="40" viewBox="0 0 42 40" aria-hidden="true">
          <defs>
            <linearGradient id="blu" x1="0" y1="1" x2="1" y2="0"><stop offset="0" stop-color="#2d62b5"/><stop offset="1" stop-color="#52b8e8"/></linearGradient>
            <linearGradient id="grn" x1="0" y1="1" x2="1" y2="0"><stop offset="0" stop-color="#d8df4a"/><stop offset=".6" stop-color="#4cb86a"/><stop offset="1" stop-color="#3da7a0"/></linearGradient>
          </defs>
          <path d="M42 0C20 1 2 10 1 24c0 4 1 6 3 8C4 20 18 8 42 0z" fill="url(#blu)"/>
          <path d="M30 11C16 12 8 19 9 26c1 4 6 5 10 3 5-3 4-8 0-8 2-3 8-6 13-6-1-1-1-3-2-4z" fill="url(#blu)"/>
          <path d="M32 11c7 2 9 7 9 12-2 9-16 16-37 16 4-1 7-3 8-5 10 0 22-6 21-13 0-4-3-6-6-6z" fill="url(#grn)"/>
        </svg>
        <div><b>极光下载站</b><span>www.xz7.com</span></div>
      </div>`;
  }

  render() {
    return html`${this.titleBar()}${this.menuBar()}${this.ribbon()}${this.workArea()}${this.statusBar()}${this.overlays()}`;
  }
}
